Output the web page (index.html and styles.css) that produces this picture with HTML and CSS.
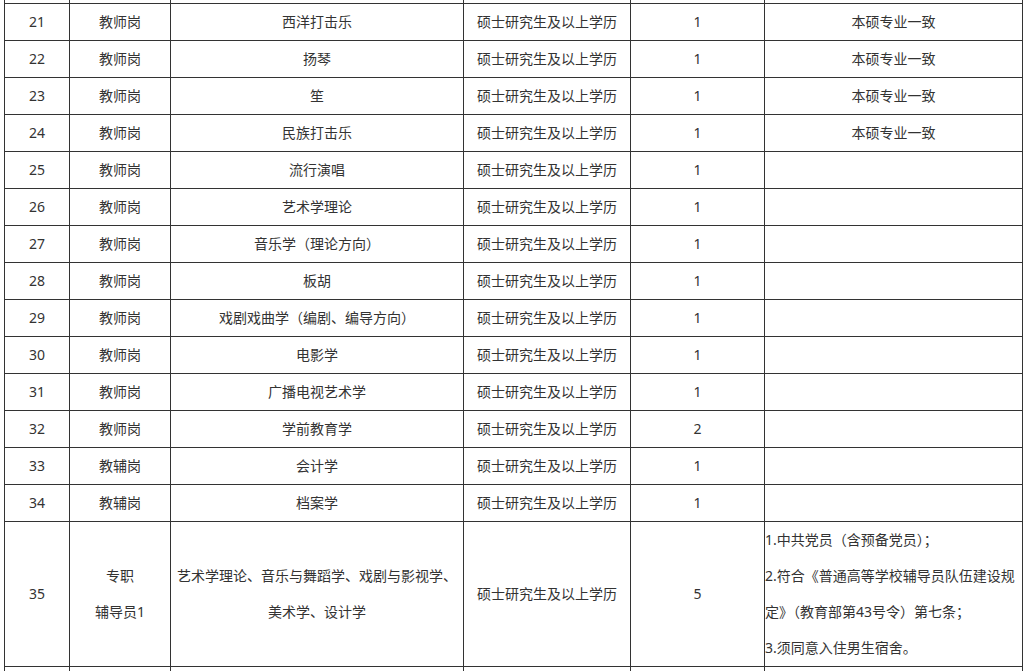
FILE: index.html
```html
<!DOCTYPE html>
<html lang="zh-CN">
<head>
<meta charset="utf-8">
<title>岗位表</title>
<link rel="stylesheet" href="styles.css">
</head>
<body>
<table class="jobs">
  <colgroup>
    <col class="c-no"><col class="c-type"><col class="c-major"><col class="c-edu"><col class="c-num"><col class="c-note">
  </colgroup>
  <tbody>
    <tr><td></td><td></td><td></td><td></td><td></td><td></td></tr>
    <tr><td>21</td><td>教师岗</td><td>西洋打击乐</td><td>硕士研究生及以上学历</td><td>1</td><td>本硕专业一致</td></tr>
    <tr><td>22</td><td>教师岗</td><td>扬琴</td><td>硕士研究生及以上学历</td><td>1</td><td>本硕专业一致</td></tr>
    <tr><td>23</td><td>教师岗</td><td>笙</td><td>硕士研究生及以上学历</td><td>1</td><td>本硕专业一致</td></tr>
    <tr><td>24</td><td>教师岗</td><td>民族打击乐</td><td>硕士研究生及以上学历</td><td>1</td><td>本硕专业一致</td></tr>
    <tr><td>25</td><td>教师岗</td><td>流行演唱</td><td>硕士研究生及以上学历</td><td>1</td><td></td></tr>
    <tr><td>26</td><td>教师岗</td><td>艺术学理论</td><td>硕士研究生及以上学历</td><td>1</td><td></td></tr>
    <tr><td>27</td><td>教师岗</td><td>音乐学（理论方向）</td><td>硕士研究生及以上学历</td><td>1</td><td></td></tr>
    <tr><td>28</td><td>教师岗</td><td>板胡</td><td>硕士研究生及以上学历</td><td>1</td><td></td></tr>
    <tr><td>29</td><td>教师岗</td><td>戏剧戏曲学（编剧、编导方向）</td><td>硕士研究生及以上学历</td><td>1</td><td></td></tr>
    <tr><td>30</td><td>教师岗</td><td>电影学</td><td>硕士研究生及以上学历</td><td>1</td><td></td></tr>
    <tr><td>31</td><td>教师岗</td><td>广播电视艺术学</td><td>硕士研究生及以上学历</td><td>1</td><td></td></tr>
    <tr><td>32</td><td>教师岗</td><td>学前教育学</td><td>硕士研究生及以上学历</td><td>2</td><td></td></tr>
    <tr><td>33</td><td>教辅岗</td><td>会计学</td><td>硕士研究生及以上学历</td><td>1</td><td></td></tr>
    <tr><td>34</td><td>教辅岗</td><td>档案学</td><td>硕士研究生及以上学历</td><td>1</td><td></td></tr>
    <tr class="tall">
      <td>35</td>
      <td><p>专职</p><p>辅导员1</p></td>
      <td><p>艺术学理论、音乐与舞蹈学、戏剧与影视学、美术学、设计学</p></td>
      <td>硕士研究生及以上学历</td>
      <td>5</td>
      <td class="note"><p>1.中共党员（含预备党员）；</p><p>2.符合《普通高等学校辅导员队伍建设规定》（教育部第43号令）第七条；</p><p>3.须同意入住男生宿舍。</p></td>
    </tr>
    <tr><td></td><td></td><td></td><td></td><td></td><td></td></tr>
  </tbody>
</table>
</body>
</html>
```

FILE: styles.css
```css
html, body {
  margin: 0;
  padding: 0;
  background: #fff;
}

body {
  font-family: "Noto Sans", "Noto Sans CJK SC", sans-serif;
  font-size: 14px;
  color: #333;
  overflow: hidden;
}

.jobs {
  border-collapse: collapse;
  table-layout: fixed;
  width: 1018px;
  margin: -34px 0 0 4px;
}

.c-no { width: 65px; }
.c-type { width: 101px; }
.c-major { width: 293px; }
.c-edu { width: 167px; }
.c-num { width: 134px; }
.c-note { width: 258px; }

.jobs td {
  border: 1px solid #333;
  height: 36px;
  padding: 0;
  text-align: center;
  vertical-align: middle;
  line-height: 20px;
  word-break: break-all;
}

.jobs td p {
  margin: 0;
  line-height: 36px;
}

.jobs td.note {
  text-align: left;
}
```
